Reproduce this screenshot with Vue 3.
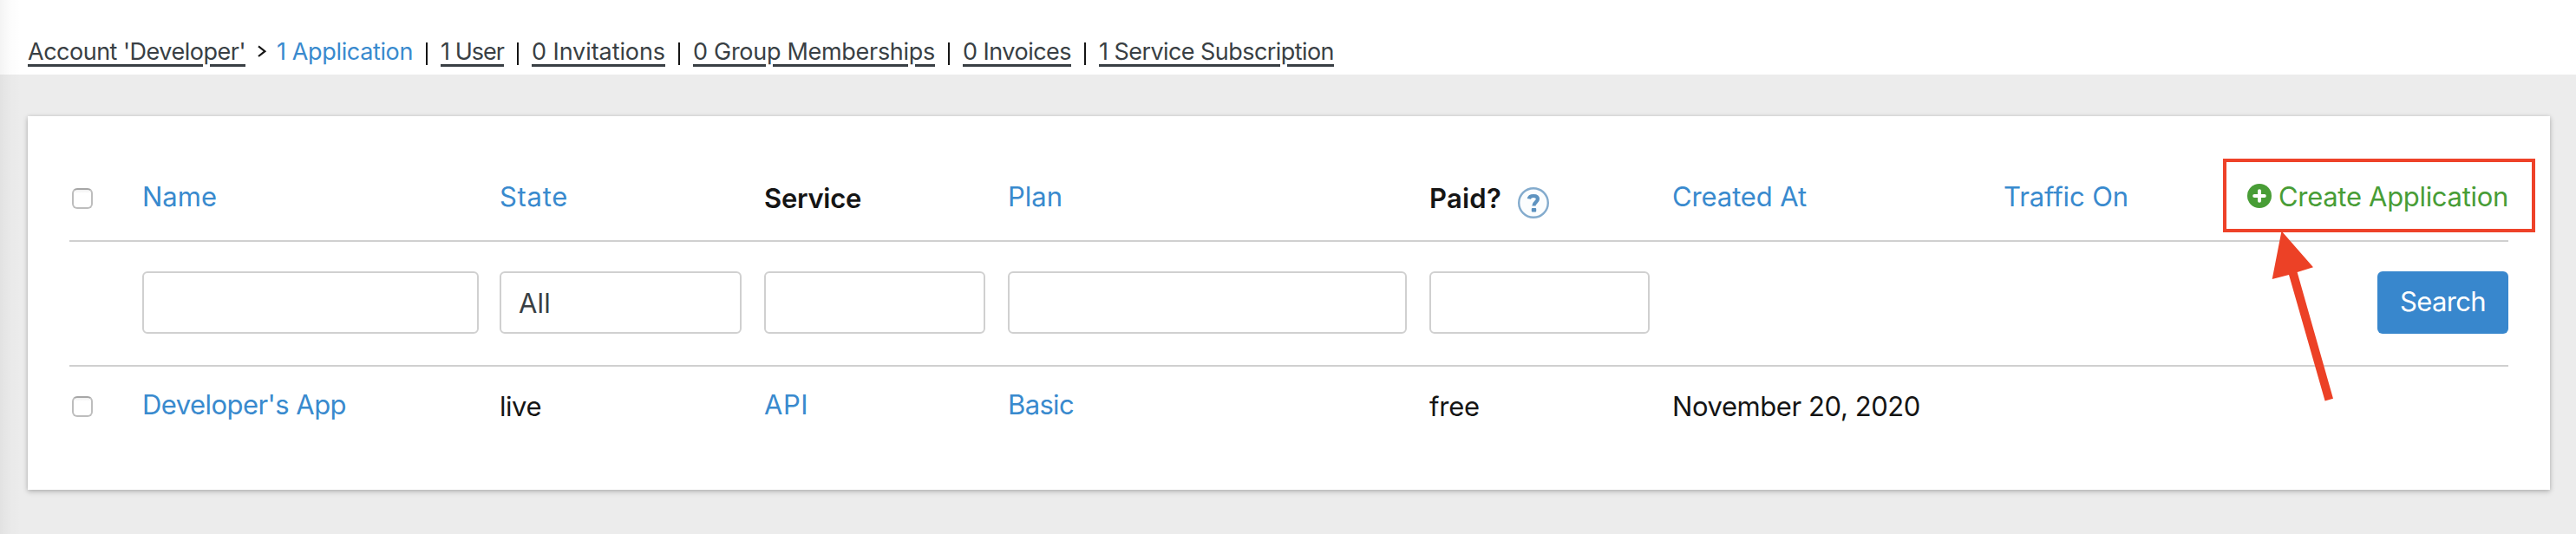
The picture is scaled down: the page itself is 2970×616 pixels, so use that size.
<script setup>
const tabs = [
  { label: '1 Application', width: 157, active: true },
  { label: '1 User', width: 73 },
  { label: '0 Invitations', width: 154 },
  { label: '0 Group Memberships', width: 279 },
  { label: '0 Invoices', width: 125 },
  { label: '1 Service Subscription', width: 271 },
]

// Tracks a label so that it fills the given width in pixels.
const vFit = {
  mounted(el, { value }) {
    const natural = el.getBoundingClientRect().width
    el.style.letterSpacing = `${(value - natural) / el.textContent.length}px`
  },
}
</script>

<template>
  <div class="page">
    <nav class="crumbs">
      <a v-fit="251" class="crumb">Account 'Developer'</a>
      <svg class="chevron" width="12" height="16" viewBox="0 0 12 16"><path d="M2 1.4 L9.4 7.2 L2 13" fill="none" stroke="#151515" stroke-width="2.2" /></svg>
      <template v-for="(t, i) in tabs" :key="t.label">
        <span v-if="i" class="bar"></span>
        <a v-fit="t.width" class="crumb" :class="{ active: t.active }">{{ t.label }}</a>
      </template>
    </nav>

    <main class="card">
      <div class="row head">
        <span class="check"></span>
        <div><a v-fit="86" class="text link">Name</a></div>
        <div><a v-fit="79" class="text link">State</a></div>
        <div><b v-fit="112" class="text">Service</b></div>
        <div><a v-fit="63" class="text link">Plan</a></div>
        <div class="paid">
          <b v-fit="83" class="text">Paid?</b>
          <svg class="help" width="36" height="36" viewBox="0 0 36 36">
            <circle cx="18" cy="18" r="16.8" fill="#fbfdfe" stroke="#83abcd" stroke-width="2.4" />
            <path d="M12.8 13.4 C13.2 10.8 15.2 10 18 10 C21.4 10 23 11.4 23 13.6 C23 17 18.4 17.2 18.4 21.4" fill="none" stroke="#5e93c0" stroke-width="4.2" />
            <rect x="15.8" y="24" width="5.4" height="4.4" rx="1" fill="#5b90be" />
          </svg>
        </div>
        <div><a v-fit="155" class="text link">Created At</a></div>
        <div><a v-fit="144" class="text link">Traffic On</a></div>
        <div class="create">
          <svg class="plus" width="28" height="28" viewBox="0 0 28 28">
            <circle cx="14" cy="14" r="14" fill="#489d36" />
            <path d="M14 8.2 V19.8 M8.2 14 H19.8" stroke="#fff" stroke-width="4" stroke-linecap="round" />
          </svg>
          <a v-fit="265" class="text green">Create Application</a>
        </div>
      </div>

      <div class="row filter">
        <span></span>
        <span class="field name"></span>
        <span class="field state"><span v-fit="37" class="text value">All</span></span>
        <span class="field service"></span>
        <span class="field plan"></span>
        <span class="field pay"></span>
        <span></span>
        <span></span>
        <button class="search"><span v-fit="99" class="text">Search</span></button>
      </div>

      <div class="row item">
        <span class="check"></span>
        <div><a v-fit="235" class="text link">Developer's App</a></div>
        <div><span v-fit="48" class="text">live</span></div>
        <div><a v-fit="51" class="text link">API</a></div>
        <div><a v-fit="76" class="text link">Basic</a></div>
        <div><span v-fit="58" class="text">free</span></div>
        <div><span v-fit="286" class="text">November 20, 2020</span></div>
      </div>
    </main>

    <div class="highlight"></div>
    <svg class="arrow" width="80" height="200" viewBox="0 0 80 200">
      <path d="M20.5 6.5 L57 48.2 L38.6 54 L80 199.8 L70.6 202.4 L29 57 L9.7 62 Z" fill="#ec4126" />
    </svg>
  </div>
</template>

<style>
body {
  margin: 0;
  background: #ececec;
}
</style>

<style scoped>
.page {
  position: relative;
  box-sizing: border-box;
  width: 2970px;
  height: 616px;
  overflow: hidden;
  background: #ececec;
  font-family: Inter, "Liberation Sans", sans-serif;
  color: #151515;
}
.page::before {
  content: "";
  position: absolute;
  inset: 0 auto 0 0;
  width: 24px;
  background: linear-gradient(90deg, rgba(0, 0, 0, 0.045), rgba(0, 0, 0, 0.012) 50%, transparent);
}
.crumbs {
  box-sizing: border-box;
  height: 86px;
  padding: 40px 0 0 32px;
  display: flex;
  align-items: flex-start;
  background: #fff;
}
.crumb {
  font-size: 27px;
  line-height: 40px;
  white-space: nowrap;
  color: #393f44;
  text-decoration: underline;
  text-decoration-thickness: 3px;
  text-underline-offset: 5px;
}
.crumb.active {
  color: #398ace;
  text-decoration: none;
}
.chevron {
  margin: 12px 11px 0 13px;
}
.bar {
  width: 2px;
  height: 26px;
  margin: 9px 15px 0;
  background: #151515;
}
.card {
  width: 2908px;
  height: 431px;
  margin: 48px 0 0 32px;
  box-sizing: border-box;
  padding: 0 48px;
  position: relative;
  background: #fff;
  box-shadow: 0 2px 6px rgba(3, 3, 3, 0.24), 0 0 4px rgba(3, 3, 3, 0.08);
}
.row {
  display: grid;
  grid-template-columns: 84px 412px 305px 281px 486px 280px 382px 280px 302px;
  align-items: start;
  box-sizing: border-box;
}
.head {
  height: 145px;
  padding-top: 73px;
  border-bottom: 2px solid #d0d0d0;
}
.filter {
  height: 144px;
  padding-top: 34px;
  border-bottom: 2px solid #d0d0d0;
}
.item {
  height: 142px;
  padding-top: 24px;
}
.text {
  display: inline-block;
  font-size: 31px;
  line-height: 40px;
  white-space: nowrap;
  vertical-align: top;
}
b.text {
  font-weight: 600;
  margin-top: 2px;
}
span.text {
  margin-top: 2px;
}
.link {
  color: #398ace;
}
.green {
  color: #489d36;
}
.check {
  box-sizing: border-box;
  width: 24px;
  height: 24px;
  margin: 10px 0 0 3px;
  border: 2px solid #bdbdbd;
  border-top-color: #a6a6a6;
  border-radius: 6px;
  background: linear-gradient(#f0f0f0, #fff 20%);
}
.paid {
  display: flex;
  align-items: flex-start;
}
.help {
  margin: 9px 0 0 19px;
}
.create {
  display: flex;
  justify-content: flex-end;
}
.plus {
  margin: 5px 8px 0 0;
}
.field {
  box-sizing: border-box;
  height: 72px;
  border: 2px solid #d0d0d0;
  border-radius: 6px;
  background: #fff;
}
.name { width: 388px; }
.state {
  width: 279px;
  padding: 13px 0 0 20px;
}
.service { width: 255px; }
.plan { width: 460px; }
.pay { width: 254px; }
.value {
  color: #393f44;
}
.search {
  justify-self: end;
  width: 151px;
  height: 72px;
  border: 0;
  border-radius: 6px;
  padding: 0 0 2px;
  background: #3887cd;
  color: #fff;
  font-family: inherit;
}
.search .text {
  margin: 0;
}
.highlight {
  position: absolute;
  box-sizing: border-box;
  left: 2563px;
  top: 183px;
  width: 360px;
  height: 85px;
  border: 4px solid #ee4229;
}
.arrow {
  position: absolute;
  left: 2610px;
  top: 260px;
  overflow: visible;
}
</style>
